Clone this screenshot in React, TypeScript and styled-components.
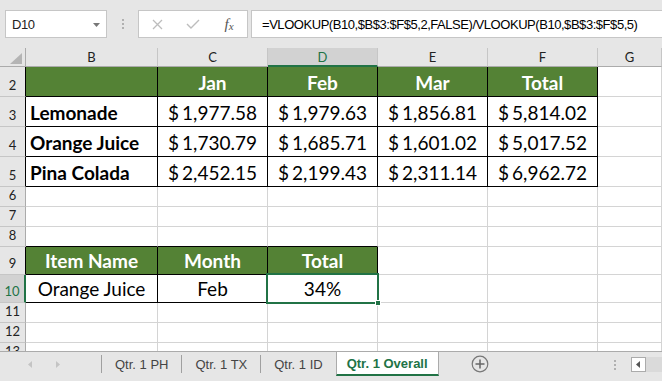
import styled, { createGlobalStyle } from "styled-components";

const GREEN = "#548235";
const ACCENT = "#217346";
const GRID = "#d4d4d4";
const INK = "#000";
const CHROME = "#e6e6e6";

type Kind = "empty" | "head" | "label" | "money" | "center";

type CellData = {
  kind: Kind;
  text?: string;
  right?: string;
  bottom?: string;
  selected?: boolean;
};

type RowData = {
  n: number;
  h: number;
  edge?: string;
  active?: boolean;
  cells: CellData[];
};

const blank: CellData = { kind: "empty" };
const under: CellData = { kind: "empty", bottom: INK };
const boxed = (kind: Kind, text = ""): CellData => ({ kind, text, right: INK, bottom: INK });
const empties = (): CellData[] => [blank, blank, blank, blank, blank, blank];

const sales = (label: string, vals: string[]): CellData[] => [
  boxed("label", label),
  ...vals.map((v) => boxed("money", v)),
  blank,
];

const columns = ["B", "C", "D", "E", "F", "G"];

const rows: RowData[] = [
  {
    n: 2,
    h: 30,
    edge: INK,
    cells: [boxed("head"), boxed("head", "Jan"), boxed("head", "Feb"), boxed("head", "Mar"), boxed("head", "Total"), blank],
  },
  { n: 3, h: 30, edge: INK, cells: sales("Lemonade", ["1,977.58", "1,979.63", "1,856.81", "5,814.02"]) },
  { n: 4, h: 30, edge: INK, cells: sales("Orange Juice", ["1,730.79", "1,685.71", "1,601.02", "5,017.52"]) },
  { n: 5, h: 30, edge: INK, cells: sales("Pina Colada", ["2,452.15", "2,199.43", "2,311.14", "6,962.72"]) },
  { n: 6, h: 20, cells: empties() },
  { n: 7, h: 20, cells: empties() },
  { n: 8, h: 20, cells: [under, under, under, blank, blank, blank] },
  {
    n: 9,
    h: 28,
    edge: INK,
    cells: [boxed("head", "Item Name"), boxed("head", "Month"), boxed("head", "Total"), blank, blank, blank],
  },
  {
    n: 10,
    h: 28,
    active: true,
    cells: [boxed("center", "Orange Juice"), boxed("center", "Feb"), { ...boxed("center", "34%"), selected: true }, blank, blank, blank],
  },
  { n: 11, h: 20, cells: empties() },
  { n: 12, h: 20, cells: empties() },
  { n: 13, h: 20, cells: empties() },
];

const tabs = ["Qtr. 1 PH", "Qtr. 1 TX", "Qtr. 1 ID"];

export default function App() {
  return (
    <Window>
      <GlobalStyle />
      <Toolbar>
        <NameBox>
          D10
          <svg width="7" height="4" viewBox="0 0 7 4">
            <polygon points="0,0 7,0 3.5,4" fill="#777" />
          </svg>
        </NameBox>
        <Grip>
          <Dots />
        </Grip>
        <FxBox>
          <FxButton>
            <svg width="11" height="11" viewBox="0 0 11 11">
              <path d="M1 1 L10 10 M10 1 L1 10" stroke="#bdbdbd" strokeWidth="1.3" />
            </svg>
          </FxButton>
          <FxButton>
            <svg width="14" height="10" viewBox="0 0 14 10">
              <path d="M1 5 L5 9 L13 1" stroke="#bdbdbd" strokeWidth="1.4" fill="none" />
            </svg>
          </FxButton>
          <FxButton>
            <FxLabel>
              f<sub>x</sub>
            </FxLabel>
          </FxButton>
        </FxBox>
        <FormulaBox>=VLOOKUP(B10,$B$3:$F$5,2,FALSE)/VLOOKUP(B10,$B$3:$F$5,5)</FormulaBox>
      </Toolbar>

      <Sheet>
        <Grid $rows={rows.map((r) => `${r.h}px`).join(" ")}>
          <Corner>
            <svg width="12" height="11" viewBox="0 0 12 11">
              <polygon points="12,0 12,11 0,11" fill="#b4b4b4" />
            </svg>
          </Corner>
          {columns.map((c) => (
            <ColHead key={c} $active={c === "D"}>
              {c}
            </ColHead>
          ))}
          {rows.map((r) => [
            <RowHead key={`h${r.n}`} $edge={r.edge ?? "#ababab"} $active={r.active}>
              {r.n}
            </RowHead>,
            ...r.cells.map((c, i) => (
              <Cell
                key={`${r.n}-${i}`}
                $kind={c.kind}
                $right={c.right ?? GRID}
                $bottom={c.bottom ?? GRID}
              >
                {c.kind === "money" ? (
                  <>
                    <Dollar>$</Dollar>
                    {c.text}
                  </>
                ) : (
                  c.text
                )}
                {c.selected && (
                  <Selection>
                    <Handle />
                  </Selection>
                )}
              </Cell>
            )),
          ])}
        </Grid>
      </Sheet>

      <TabBar>
        <Nav>
          <svg width="4" height="7" viewBox="0 0 4 7">
            <polygon points="4,0 4,7 0,3.5" fill="#c4c4c4" />
          </svg>
          <svg width="4" height="7" viewBox="0 0 4 7">
            <polygon points="0,0 0,7 4,3.5" fill="#c4c4c4" />
          </svg>
        </Nav>
        {tabs.map((t) => (
          <Tab key={t}>{t}</Tab>
        ))}
        <ActiveTab>Qtr. 1 Overall</ActiveTab>
        <AddButton>
          <svg width="18" height="18" viewBox="0 0 18 18">
            <circle cx="9" cy="9" r="7.8" stroke="#777" strokeWidth="1.2" fill="none" />
            <path d="M9 4.5 V13.5 M4.5 9 H13.5" stroke="#666" strokeWidth="1.5" />
          </svg>
        </AddButton>
        <ScrollArea>
          <Dots />
          <ScrollBox>
            <svg width="4" height="7" viewBox="0 0 4 7">
              <polygon points="4,0 4,7 0,3.5" fill="#555" />
            </svg>
          </ScrollBox>
          <Track />
        </ScrollArea>
      </TabBar>
    </Window>
  );
}

function Dots() {
  return (
    <svg width="2" height="10" viewBox="0 0 2 10">
      <rect x="0" y="0" width="2" height="2" fill="#b0b0b0" />
      <rect x="0" y="4" width="2" height="2" fill="#b0b0b0" />
      <rect x="0" y="8" width="2" height="2" fill="#b0b0b0" />
    </svg>
  );
}

const GlobalStyle = createGlobalStyle`
  * { box-sizing: border-box; }
  html, body { margin: 0; padding: 0; overflow: hidden; }
  body { font-family: "Liberation Sans", Arial, sans-serif; background: ${CHROME}; }
`;

const Window = styled.div`
  width: 662px;
  height: 381px;
  display: flex;
  flex-direction: column;
  background: ${CHROME};
  overflow: hidden;
`;

const Toolbar = styled.div`
  height: 48px;
  flex: none;
  display: flex;
  align-items: flex-start;
  padding: 10px 0 0 5px;
`;

const NameBox = styled.div`
  width: 102px;
  height: 28px;
  flex: none;
  background: #fff;
  border: 1px solid #c6c6c6;
  display: flex;
  align-items: center;
  justify-content: space-between;
  padding: 1px 6px 0 6px;
  font-size: 13px;
  letter-spacing: -0.45px;
  color: #222;
`;

const Grip = styled.div`
  width: 31px;
  height: 28px;
  flex: none;
  display: flex;
  align-items: center;
  justify-content: center;
`;

const FxBox = styled.div`
  width: 110px;
  height: 28px;
  flex: none;
  background: #fff;
  border: 1px solid #c6c6c6;
  display: flex;
`;

const FxButton = styled.div`
  width: 36px;
  display: flex;
  align-items: center;
  justify-content: center;
`;

const FxLabel = styled.span`
  font-family: "Liberation Serif", serif;
  font-style: italic;
  font-size: 15px;
  color: #555;
  sub {
    font-size: 11px;
    vertical-align: -1px;
  }
`;

const FormulaBox = styled.div`
  flex: 1;
  height: 28px;
  margin: 0 -2px 0 3px;
  background: #fff;
  border: 1px solid #c6c6c6;
  display: flex;
  align-items: center;
  padding: 1px 0 0 10px;
  font-size: 13px;
  letter-spacing: -0.45px;
  color: #000;
  white-space: nowrap;
  overflow: hidden;
`;

const Sheet = styled.div`
  height: 303px;
  flex: none;
  overflow: hidden;
  background: #fff;
`;

const Grid = styled.div<{ $rows: string }>`
  display: grid;
  grid-template-columns: 26px 132px 110px 110px 110px 110px 64px;
  grid-template-rows: 19px ${(p) => p.$rows};
`;

const Corner = styled.div`
  background: ${CHROME};
  border-right: 1px solid #ababab;
  border-bottom: 1px solid #ababab;
  display: flex;
  align-items: flex-end;
  justify-content: flex-end;
  padding: 0 3px 2px 0;
`;

const ColHead = styled.div<{ $active?: boolean }>`
  display: flex;
  align-items: center;
  justify-content: center;
  background: ${(p) => (p.$active ? "#d2d2d2" : CHROME)};
  border-right: 1px solid #c6c6c6;
  border-bottom: ${(p) => (p.$active ? `2px solid ${ACCENT}` : "1px solid #ababab")};
  color: ${(p) => (p.$active ? ACCENT : "#222")};
  font-family: Lato, "Liberation Sans", sans-serif;
  font-size: 13px;
  padding-top: ${(p) => (p.$active ? "1px" : "0")};
`;

const RowHead = styled.div<{ $edge: string; $active?: boolean }>`
  display: flex;
  align-items: flex-end;
  justify-content: center;
  padding-bottom: 3px;
  background: ${(p) => (p.$active ? "#d2d2d2" : CHROME)};
  border-right: ${(p) => (p.$active ? `2px solid ${ACCENT}` : `1px solid ${p.$edge}`)};
  border-bottom: 1px solid #c6c6c6;
  color: ${(p) => (p.$active ? ACCENT : "#222")};
  font-family: Lato, "Liberation Sans", sans-serif;
  font-size: 13px;
  line-height: 15px;
`;

const Cell = styled.div<{ $kind: Kind; $right: string; $bottom: string }>`
  position: relative;
  display: flex;
  align-items: flex-end;
  justify-content: ${(p) => (p.$kind === "label" ? "flex-start" : "center")};
  padding: 0 4px 3px;
  border-right: 1px solid ${(p) => p.$right};
  border-bottom: 1px solid ${(p) => p.$bottom};
  background: ${(p) => (p.$kind === "head" ? GREEN : "#fff")};
  color: ${(p) => (p.$kind === "head" ? "#fff" : "#000")};
  font-family: Lato, "Liberation Sans", sans-serif;
  font-size: 19px;
  line-height: 20px;
  font-weight: ${(p) => (p.$kind === "head" || p.$kind === "label" ? 700 : 400)};
  white-space: nowrap;
  min-width: 0;
`;

const Dollar = styled.span`
  margin-right: 3px;
`;

const Selection = styled.div`
  position: absolute;
  top: -2px;
  left: -2px;
  right: -2px;
  bottom: -2px;
  border: 2px solid ${ACCENT};
  z-index: 2;
`;

const Handle = styled.div`
  position: absolute;
  right: -4px;
  bottom: -4px;
  width: 6px;
  height: 6px;
  background: ${ACCENT};
  border: 1px solid #fff;
`;

const TabBar = styled.div`
  height: 30px;
  flex: none;
  border-top: 1px solid #ababab;
  display: flex;
  align-items: flex-start;
  font-size: 13px;
`;

const Nav = styled.div`
  width: 101px;
  height: 24px;
  flex: none;
  display: flex;
  align-items: center;
  gap: 24px;
  padding-left: 28px;
`;

const Tab = styled.div`
  height: 18px;
  margin-top: 3px;
  padding: 0 13px;
  border-left: 1px solid #a0a0a0;
  display: flex;
  align-items: center;
  color: #444;
  white-space: nowrap;
`;

const ActiveTab = styled.div`
  height: 24px;
  padding: 0 10px;
  border-left: 1px solid #ababab;
  border-right: 1px solid #ababab;
  border-bottom: 2px solid ${ACCENT};
  background: #fff;
  display: flex;
  align-items: center;
  color: ${ACCENT};
  font-weight: 700;
  white-space: nowrap;
`;

const AddButton = styled.div`
  height: 24px;
  margin-left: 32px;
  display: flex;
  align-items: center;
`;

const ScrollArea = styled.div`
  height: 24px;
  margin-left: auto;
  display: flex;
  align-items: center;
  padding-top: 1px;
`;

const ScrollBox = styled.div`
  width: 15px;
  height: 15px;
  margin-left: 15px;
  background: #fff;
  border: 1px solid #ababab;
  display: flex;
  align-items: center;
  justify-content: center;
  padding-right: 1px;
`;

const Track = styled.div`
  width: 16px;
  height: 15px;
  background: #dadada;
`;
